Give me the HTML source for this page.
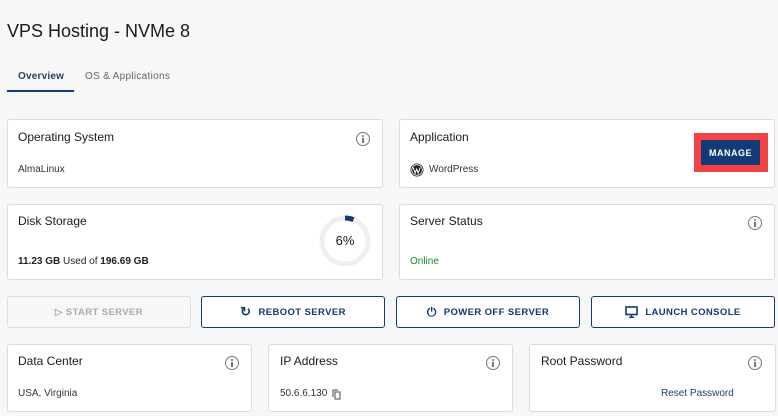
<!DOCTYPE html><html><head><style>
*{box-sizing:border-box;margin:0;padding:0}
body{width:778px;height:416px;background:#f7f7f7;font-family:"Liberation Sans",sans-serif;color:#1a1a1a;position:relative;overflow:hidden}
.a{position:absolute}
.card{position:absolute;background:#fff;border:1px solid #dcdcdc;border-radius:3px}
.t{position:absolute;font-size:12px;color:#1a1a1a}
.s{position:absolute;font-size:10px;color:#333}
.info{position:absolute;width:14px;height:14px;border:1.5px solid #777;border-radius:50%;}
.info:before{content:"";position:absolute;left:4.8px;top:2px;width:1.8px;height:1.8px;background:#777;border-radius:50%}
.info:after{content:"";position:absolute;left:4.8px;top:5px;width:1.8px;height:5px;background:#777}
.btn{position:absolute;top:296px;height:32px;width:184px;border:1.5px solid #133a73;border-radius:3px;background:#fff;color:#133a73;font-weight:bold;font-size:9.5px;letter-spacing:.4px;display:flex;align-items:center;justify-content:center;gap:7px}
</style></head><body>
<div class="a" style="left:7px;top:21px;font-size:18px;color:#1a1a1a">VPS Hosting - NVMe 8</div>
<div class="a" style="left:18px;top:71px;font-size:10px;font-weight:bold;color:#2b3f60;letter-spacing:.2px">Overview</div>
<div class="a" style="left:85px;top:71px;font-size:10px;color:#666;letter-spacing:.3px">OS &amp; Applications</div>
<div class="a" style="left:7px;top:90px;width:67px;height:1.5px;background:#133a73"></div>

<div class="card" style="left:7px;top:119px;width:376px;height:69px"></div>
<div class="t" style="left:18px;top:130px">Operating System</div>
<div class="info" style="left:356px;top:132px"></div>
<div class="s" style="left:18px;top:164px">AlmaLinux</div>

<div class="card" style="left:399px;top:119px;width:376px;height:69px"></div>
<div class="t" style="left:410px;top:130px">Application</div>
<svg class="a" style="left:410px;top:163px" width="14" height="14" viewBox="0 0 14 14"><circle cx="7" cy="7" r="6.5" fill="#222"/><circle cx="7" cy="7" r="5.3" fill="none" stroke="#fff" stroke-width=".8"/><path d="M3.2 4.5l2 5.5 1.5-4 1.5 4 2-5.5" stroke="#fff" stroke-width="1" fill="none"/></svg>
<div class="s" style="left:429px;top:164px">WordPress</div>
<div class="a" style="left:694px;top:133px;width:74px;height:39px;background:#f24447"></div>
<div class="a" style="left:701px;top:140px;width:59px;height:25px;background:#123a75;color:#fff;font-weight:bold;font-size:9px;letter-spacing:.5px;display:flex;align-items:center;justify-content:center">MANAGE</div>

<div class="card" style="left:7px;top:204px;width:376px;height:76px"></div>
<div class="t" style="left:18px;top:214px">Disk Storage</div>
<div class="s" style="left:18px;top:256px;color:#222"><b>11.23 GB</b> Used of <b>196.69 GB</b></div>
<svg class="a" style="left:318px;top:214px" width="54" height="54" viewBox="0 0 54 54"><circle cx="27" cy="27" r="23" fill="none" stroke="#efefef" stroke-width="5"/><circle cx="27" cy="27" r="23" fill="none" stroke="#133a73" stroke-width="5" stroke-dasharray="8.7 200" transform="rotate(-90 27 27)"/><text x="27" y="31" text-anchor="middle" font-size="13" font-family="Liberation Sans" fill="#1a1a1a">6%</text></svg>

<div class="card" style="left:399px;top:204px;width:376px;height:76px"></div>
<div class="t" style="left:410px;top:214px">Server Status</div>
<div class="info" style="left:748px;top:216px"></div>
<div class="s" style="left:410px;top:256px;color:#1a8a2a">Online</div>

<div class="btn" style="left:7px;border-color:#ddd;color:#aaa;background:#f7f7f7;border-width:1px">▷ START SERVER</div>
<div class="btn" style="left:201px"><span style="font-size:13px">↻</span>REBOOT SERVER</div>
<div class="btn" style="left:396px"><span style="font-size:12px">⏻</span>POWER OFF SERVER</div>
<div class="btn" style="left:591px"><svg width="13" height="12" viewBox="0 0 13 12"><rect x="1" y="1" width="11" height="7.5" fill="none" stroke="#133a73" stroke-width="1.6"/><path d="M6.5 9v2M4 11.2h5" stroke="#133a73" stroke-width="1.5"/></svg>LAUNCH CONSOLE</div>

<div class="card" style="left:7px;top:344px;width:245px;height:68px"></div>
<div class="t" style="left:18px;top:354px">Data Center</div>
<div class="info" style="left:225px;top:356px"></div>
<div class="s" style="left:18px;top:388px">USA, Virginia</div>

<div class="card" style="left:268px;top:344px;width:245px;height:68px"></div>
<div class="t" style="left:280px;top:354px">IP Address</div>
<div class="info" style="left:486px;top:356px"></div>
<div class="s" style="left:280px;top:388px">50.6.6.130</div>
<svg class="a" style="left:332px;top:389px" width="10" height="11" viewBox="0 0 10 11"><path d="M1 1v7M1 1h5" stroke="#666" stroke-width="1.2" fill="none"/><rect x="3" y="3" width="5" height="7" fill="none" stroke="#666" stroke-width="1.2"/></svg>

<div class="card" style="left:529px;top:344px;width:247px;height:68px"></div>
<div class="t" style="left:541px;top:354px">Root Password</div>
<div class="info" style="left:748px;top:356px"></div>
<div class="s" style="left:661px;top:388px;color:#1d3f77">Reset Password</div>
</body></html>
